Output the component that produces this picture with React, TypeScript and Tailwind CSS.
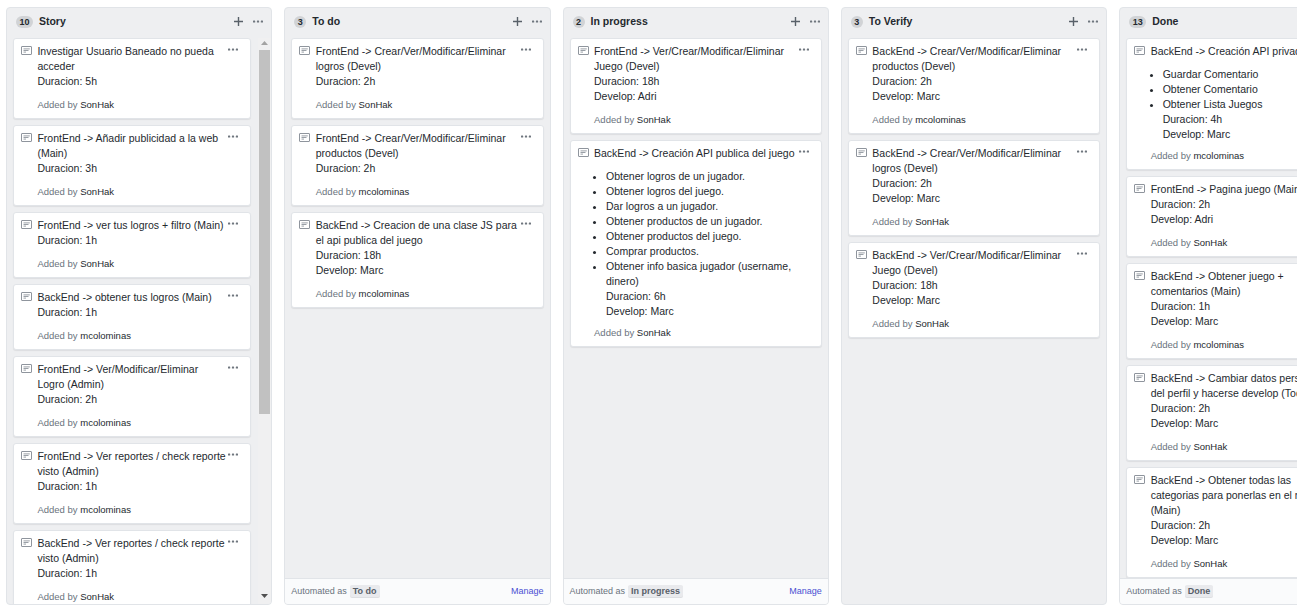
import React from "react";

type CardData = { title: string[]; list?: string[]; tail?: string[]; by: string };
type ColumnData = { count: number; name: string; cards: CardData[]; automated?: boolean; scroll?: boolean };

const columns: ColumnData[] = [
  {
    count: 10,
    name: "Story",
    scroll: true,
    cards: [
      { title: ["Investigar Usuario Baneado no pueda", "acceder", "Duracion: 5h"], by: "SonHak" },
      { title: ["FrontEnd -> Añadir publicidad a la web", "(Main)", "Duracion: 3h"], by: "SonHak" },
      { title: ["FrontEnd -> ver tus logros + filtro (Main)", "Duracion: 1h"], by: "SonHak" },
      { title: ["BackEnd -> obtener tus logros (Main)", "Duracion: 1h"], by: "mcolominas" },
      { title: ["FrontEnd -> Ver/Modificar/Eliminar", "Logro (Admin)", "Duracion: 2h"], by: "mcolominas" },
      { title: ["FrontEnd -> Ver reportes / check reporte", "visto (Admin)", "Duracion: 1h"], by: "mcolominas" },
      { title: ["BackEnd -> Ver reportes / check reporte", "visto (Admin)", "Duracion: 1h"], by: "SonHak" },
    ],
  },
  {
    count: 3,
    name: "To do",
    automated: true,
    cards: [
      { title: ["FrontEnd -> Crear/Ver/Modificar/Eliminar", "logros (Devel)", "Duracion: 2h"], by: "SonHak" },
      { title: ["FrontEnd -> Crear/Ver/Modificar/Eliminar", "productos (Devel)", "Duracion: 2h"], by: "mcolominas" },
      { title: ["BackEnd -> Creacion de una clase JS para", "el api publica del juego", "Duracion: 18h", "Develop: Marc"], by: "mcolominas" },
    ],
  },
  {
    count: 2,
    name: "In progress",
    automated: true,
    cards: [
      { title: ["FrontEnd -> Ver/Crear/Modificar/Eliminar", "Juego (Devel)", "Duracion: 18h", "Develop: Adri"], by: "SonHak" },
      {
        title: ["BackEnd -> Creación API publica del juego"],
        list: [
          "Obtener logros de un jugador.",
          "Obtener logros del juego.",
          "Dar logros a un jugador.",
          "Obtener productos de un jugador.",
          "Obtener productos del juego.",
          "Comprar productos.",
          "Obtener info basica jugador (username,",
        ],
        tail: ["dinero)", "Duracion: 6h", "Develop: Marc"],
        by: "SonHak",
      },
    ],
  },
  {
    count: 3,
    name: "To Verify",
    cards: [
      { title: ["BackEnd -> Crear/Ver/Modificar/Eliminar", "productos (Devel)", "Duracion: 2h", "Develop: Marc"], by: "mcolominas" },
      { title: ["BackEnd -> Crear/Ver/Modificar/Eliminar", "logros (Devel)", "Duracion: 2h", "Develop: Marc"], by: "SonHak" },
      { title: ["BackEnd -> Ver/Crear/Modificar/Eliminar", "Juego (Devel)", "Duracion: 18h", "Develop: Marc"], by: "SonHak" },
    ],
  },
  {
    count: 13,
    name: "Done",
    automated: true,
    cards: [
      {
        title: ["BackEnd -> Creación API privada"],
        list: ["Guardar Comentario", "Obtener Comentario", "Obtener Lista Juegos"],
        tail: ["Duracion: 4h", "Develop: Marc"],
        by: "mcolominas",
      },
      { title: ["FrontEnd -> Pagina juego (Main)", "Duracion: 2h", "Develop: Adri"], by: "SonHak" },
      { title: ["BackEnd -> Obtener juego +", "comentarios (Main)", "Duracion: 1h", "Develop: Marc"], by: "mcolominas" },
      { title: ["BackEnd -> Cambiar datos personales", "del perfil y hacerse develop (Todos)", "Duracion: 2h", "Develop: Marc"], by: "SonHak" },
      { title: ["BackEnd -> Obtener todas las", "categorias para ponerlas en el menu", "(Main)", "Duracion: 2h", "Develop: Marc"], by: "SonHak" },
    ],
  },
];

function Dots() {
  return (
    <svg width="10" height="3" viewBox="0 0 10 3" className="block shrink-0" fill="#6f767e">
      <rect x="0" y="0.6" width="2.2" height="2" rx="0.4" />
      <rect x="3.9" y="0.6" width="2.2" height="2" rx="0.4" />
      <rect x="7.8" y="0.6" width="2.2" height="2" rx="0.4" />
    </svg>
  );
}

function NoteIcon() {
  return (
    <svg width="11" height="9" viewBox="0 0 11 9" className="block shrink-0" fill="none" stroke="#8f959d">
      <rect x="0.5" y="0.5" width="10" height="8" rx="0.4" />
      <path d="M2.5 2.9H8.8M2.5 4.5H7.5M2.5 6.1H5" strokeWidth="0.9" />
    </svg>
  );
}

function Card({ card }: { card: CardData }) {
  return (
    <article className="flex shrink-0 rounded-[3px] border border-[#e1e4e8] bg-white pl-[7px] shadow-[0_1px_1px_rgba(27,31,35,0.08)]">
      <div className="w-[16.5px] shrink-0 pt-[7px]">
        <NoteIcon />
      </div>
      <div className="min-w-0 flex-1 whitespace-nowrap pt-[5px] text-[10.5px] leading-[15px] text-[#24292e]">
        {card.title.map((line, i) => (
          <p key={i}>{line}</p>
        ))}
        {card.list && (
          <ul className="mt-2 list-disc pl-3">
            {card.list.map((item, i) => (
              <li key={i}>
                {item}
                {i === card.list!.length - 1 && card.tail?.map((t) => <p key={t}>{t}</p>)}
              </li>
            ))}
          </ul>
        )}
        <p className={`${card.list ? "mt-[6px] mb-[6px]" : "mt-[8px] mb-[6px]"} text-[9.5px] leading-[15px] text-[#6a737d]`}>
          Added by <span className="text-[#24292e]">{card.by}</span>
        </p>
      </div>
      <div className="w-0 shrink-0">
        <div className="-ml-[22px] w-[10px] pt-[9px]">
          <Dots />
        </div>
      </div>
    </article>
  );
}

function Scrollbar() {
  return (
    <div className="flex w-[13px] shrink-0 flex-col items-center bg-[#f0f0f1]">
      <svg width="7" height="12" viewBox="0 0 7 12" className="block shrink-0">
        <path d="M0 7L3.5 3L7 7Z" fill="#a3a3a3" />
      </svg>
      <div className="h-[364px] w-[11px] shrink-0 bg-[#c1c1c1]" />
      <div className="flex-1" />
      <svg width="7" height="12" viewBox="0 0 7 12" className="block shrink-0">
        <path d="M0 2H7L3.5 6Z" fill="#505050" />
      </svg>
    </div>
  );
}

function Column({ column }: { column: ColumnData }) {
  return (
    <section className="flex h-[598px] w-[266.3px] shrink-0 flex-col overflow-hidden rounded-[4px] border border-[#e1e4e8] bg-[#eeeff1]">
      <header className="flex h-[30px] shrink-0 items-start pl-[9px] pr-[8px] text-[#24292e]">
        <span className="mt-2 flex h-3 min-w-3 items-center justify-center rounded-full bg-[#d1d3d6] px-[3.5px] text-[9px] font-bold leading-3">
          {column.count}
        </span>
        <h3 className="ml-[6px] mt-[6px] text-[10.5px] font-bold leading-[15px]">{column.name}</h3>
        <div className="ml-auto mt-[9px] flex h-[9px] items-center gap-[10px]">
          <svg width="9" height="9" viewBox="0 0 9 9" className="block" stroke="#586069" strokeWidth="1.4">
            <path d="M4.5 0V9M0 4.5H9" />
          </svg>
          <Dots />
        </div>
      </header>
      <div className="flex min-h-0 flex-1">
        <div className={`flex min-h-0 min-w-0 flex-1 flex-col gap-[6px] overflow-hidden pl-[6px] ${column.scroll ? "pr-[7px]" : "pr-[5.7px]"}`}>
          {column.cards.map((card, i) => (
            <Card key={i} card={card} />
          ))}
        </div>
        {column.scroll && <Scrollbar />}
      </div>
      {column.automated && (
        <footer className="flex h-[26px] shrink-0 items-center border-t border-[#e1e4e8] bg-[#fafbfc] px-[6px] pb-[2px] text-[9px] leading-3 text-[#6a737d]">
          <span>Automated as</span>
          <span className="ml-[3px] rounded-[2px] bg-[#e9eaed] px-[3px] font-bold text-[#586069] shadow-[0_1px_0_#dddfe2]">{column.name}</span>
          <a className="ml-auto text-[#4a50d3]">Manage</a>
        </footer>
      )}
    </section>
  );
}

export default function App() {
  return (
    <main className="flex h-[610px] w-[1297px] gap-3 overflow-hidden bg-white pl-[5.95px] pt-[7px] font-['Liberation_Sans',Arial,sans-serif]">
      {columns.map((column) => (
        <Column key={column.name} column={column} />
      ))}
    </main>
  );
}
